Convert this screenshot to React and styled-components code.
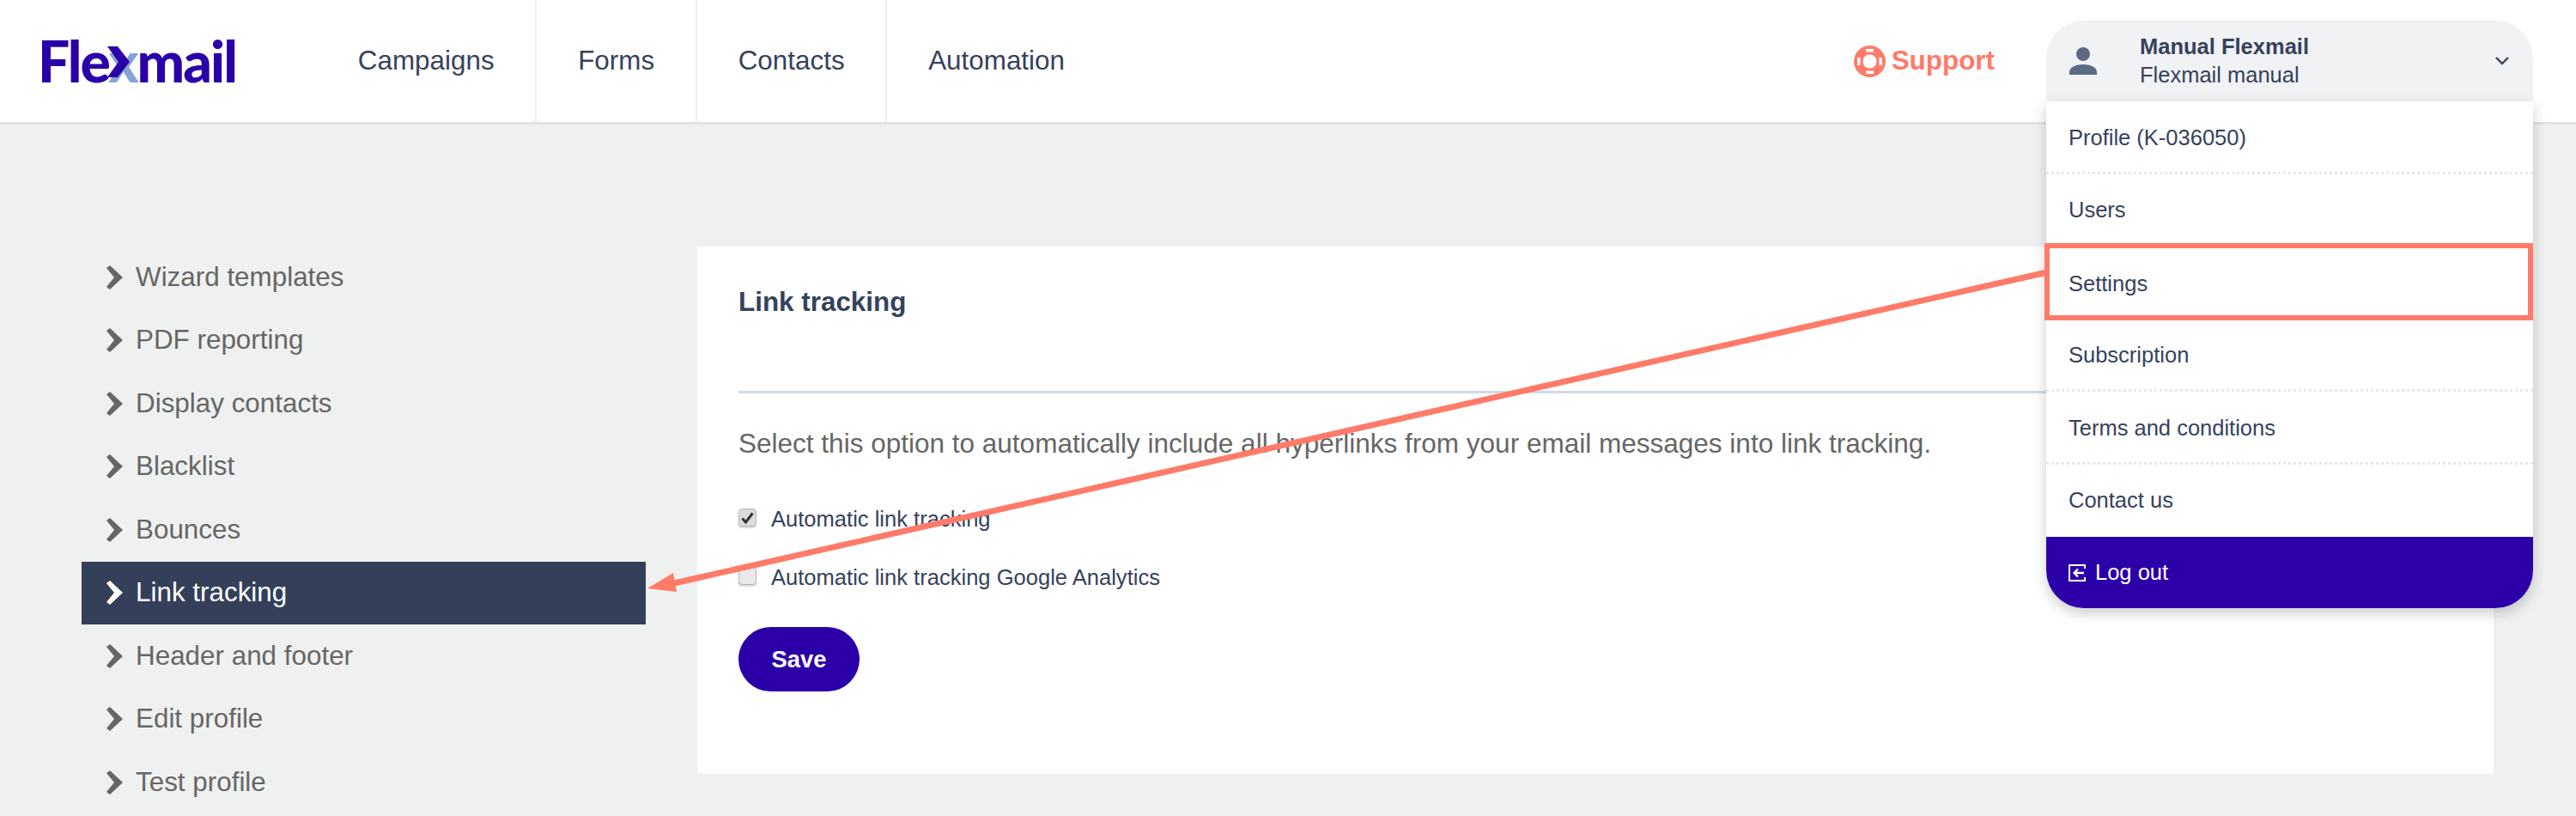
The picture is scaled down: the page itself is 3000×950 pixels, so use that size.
import React from 'react';
import styled, { createGlobalStyle } from 'styled-components';

const Global = createGlobalStyle`
  html, body { margin: 0; padding: 0; height: 950px; overflow: hidden; background: #eff1f0; }
  body { font-family: "Liberation Sans", Arial, sans-serif; color: #35425c; }
  * { box-sizing: border-box; }
`;

const Page = styled.div`
  position: relative;
  width: 3000px;
  height: 950px;
  overflow: hidden;
  background: #eff1f0;
`;

const Header = styled.header`
  display: flex;
  align-items: center;
  height: 145px;
  background: #fff;
  border-bottom: 3px solid #e2e3e3;
`;

const Logo = styled.div`
  position: relative;
  flex: 0 0 369px;
  padding-left: 44px;
  font-family: "Lato", sans-serif;
  font-weight: 900;
  font-size: 66px;
  line-height: 70px;
  letter-spacing: -2px;
  color: #2b00a8;
`;

const LogoX = styled.span`
  position: relative;
  color: #86a3d6;
`;

const LogoChevron = styled.svg`
  position: absolute;
  left: -1px;
  top: 23px;
  width: 30px;
  height: 36px;
`;

const Nav = styled.nav`
  display: flex;
  height: 142px;
`;

const NavLink = styled.a`
  display: flex;
  align-items: center;
  padding: 0 47.8px;
  font-size: 31.4px;
  color: #35425c;
  border-right: ${p => (p.$last ? '0' : '2px solid #eeeeee')};
`;

const Spacer = styled.div`
  flex: 1;
`;

const Support = styled.a`
  display: flex;
  align-items: center;
  gap: 7px;
  margin-right: 60px;
  font-size: 31.4px;
  font-weight: 700;
  color: #ff7b69;
`;

const Account = styled.div`
  position: relative;
  width: 567px;
  margin-right: 50px;
  z-index: 2;
`;

const AccountHead = styled.div`
  display: flex;
  align-items: center;
  height: 94px;
  padding: 0 28px 0 27px;
  background: #f1f2f4;
  border-radius: 44px 44px 0 0;
`;

const AccountText = styled.div`
  flex: 1;
  margin-left: 50px;
`;

const AccountName = styled.div`
  font-size: 25.5px;
  line-height: 33px;
  font-weight: 700;
  color: #35425c;
`;

const AccountSub = styled.div`
  font-size: 25.5px;
  line-height: 33px;
  color: #35425c;
`;

const Menu = styled.ul`
  position: absolute;
  top: 94px;
  left: 0;
  right: 0;
  margin: 0;
  padding: 0;
  list-style: none;
  background: #fff;
  border-radius: 0 0 44px 44px;
  box-shadow: 0 6px 16px rgba(0, 0, 0, 0.2);
`;

const MenuItem = styled.li`
  position: relative;
  display: flex;
  align-items: center;
  height: 84.5px;
  padding: ${p => (p.$plain ? '0' : '3px')} 0 0 26px;
  font-size: 25.5px;
  color: #35425c;
  border-bottom: ${p => (p.$plain ? '0' : '3px dotted #e6e7e8')};

  ${p => p.$highlight && `
    border-bottom: 0;
    &::after {
      content: "";
      position: absolute;
      top: -4px;
      left: -2px;
      right: 0;
      bottom: -1px;
      border: 6px solid #ff7b69;
    }
  `}
`;

const LogoutItem = styled.li`
  display: flex;
  align-items: center;
  gap: 11px;
  height: 83px;
  padding-left: 26px;
  font-size: 25.5px;
  color: #fff;
  background: #2b00a8;
  border-radius: 0 0 44px 44px;
`;

const Content = styled.main`
  display: grid;
  grid-template-columns: 657px 2092px;
  column-gap: 60px;
  padding: 142px 0 0 95px;
  align-items: start;
`;

const Sidebar = styled.ul`
  margin: -1px 0 0;
  padding: 0;
  list-style: none;
`;

const SideItem = styled.li`
  display: flex;
  align-items: center;
  gap: 15px;
  height: 73.5px;
  padding-left: 29px;
  font-size: 31.4px;
  color: ${p => (p.$active ? '#fff' : '#666666')};
  background: ${p => (p.$active ? '#344059' : 'transparent')};
`;

const Card = styled.section`
  padding: 48px 50px 96px 48px;
  background: #fff;
`;

const CardTitle = styled.h2`
  margin: 0;
  padding-bottom: 86px;
  font-size: 31.4px;
  line-height: 34px;
  font-weight: 700;
  color: #35425c;
  border-bottom: 3px solid #d3d9e6;
`;

const Description = styled.p`
  margin: 38px 0 48px;
  font-size: 31.52px;
  line-height: 40px;
  color: #666666;
`;

const CheckRow = styled.label`
  display: flex;
  align-items: center;
  gap: 17px;
  height: 40px;
  margin-bottom: 28px;
  font-size: 25.55px;
  color: #35425c;
`;

const Box = styled.span`
  display: flex;
  align-items: center;
  justify-content: center;
  width: 21px;
  height: 21px;
  margin-top: -3px;
  background: ${p => (p.$checked ? '#dcdcdc' : '#e9e9e9')};
  border: 1px solid #b5b5b5;
  border-radius: 4px;
  box-shadow: 0 2px 0 #dddddd;
`;

const SaveButton = styled.button`
  display: block;
  width: 141px;
  height: 75px;
  margin-top: 38px;
  border: 0;
  border-radius: 38px;
  background: #2b00a8;
  color: #fff;
  font-family: "Liberation Sans", Arial, sans-serif;
  font-size: 27.4px;
  font-weight: 700;
`;

const Overlay = styled.svg`
  position: absolute;
  inset: 0;
  z-index: 3;
  pointer-events: none;
`;

const SideChevron = ({ color }) => (
  <svg width="19" height="28" viewBox="0 0 19 28">
    <path d="M0 3 L4 0 L19 14 L4 28 L0 25 L9 14 Z" fill={color} />
  </svg>
);

const Lifebuoy = () => (
  <svg width="37" height="37" viewBox="0 0 37 37">
    <circle cx="18.5" cy="18.5" r="18.5" fill="#ff7b69" />
    <circle cx="18.5" cy="18.5" r="8" fill="#fff" />
    <rect x="14" y="4" width="9" height="3.5" fill="#fff" />
    <rect x="14" y="29.5" width="9" height="3.5" fill="#fff" />
    <rect x="4" y="14" width="3.5" height="9" fill="#fff" />
    <rect x="29.5" y="14" width="3.5" height="9" fill="#fff" />
  </svg>
);

const Person = () => (
  <svg width="32" height="32" viewBox="0 0 32 32">
    <circle cx="16" cy="8" r="8" fill="#5c6b83" />
    <path d="M0 32 V29 C0 23 8 20 16 20 C24 20 32 23 32 29 V32 Z" fill="#5c6b83" />
  </svg>
);

const Caret = () => (
  <svg width="16" height="10" viewBox="0 0 16 10">
    <path d="M1 1 L8 8 L15 1" fill="none" stroke="#35425c" strokeWidth="2.4" />
  </svg>
);

const LogoutIcon = () => (
  <svg width="20" height="20" viewBox="0 0 20 20">
    <path d="M19 5 V1 H1 V19 H19 V15" fill="none" stroke="#fff" strokeWidth="2" />
    <path d="M18 10 H7 M11 5.5 L6.5 10 L11 14.5" fill="none" stroke="#fff" strokeWidth="2.4" />
  </svg>
);

const Check = () => (
  <svg width="15" height="14" viewBox="0 0 15 14">
    <path d="M1.5 7.5 L5.5 12 L13.5 1.5" fill="none" stroke="#333" strokeWidth="3" />
  </svg>
);

const sideItems = ['Wizard templates', 'PDF reporting', 'Display contacts', 'Blacklist', 'Bounces', 'Link tracking', 'Header and footer', 'Edit profile', 'Test profile'];
const menuItems = ['Profile (K-036050)', 'Users', 'Settings', 'Subscription', 'Terms and conditions', 'Contact us'];
const navItems = ['Campaigns', 'Forms', 'Contacts', 'Automation'];

export default function App() {
  return (
    <Page>
      <Global />
      <Header>
        <Logo>
          Fle<LogoX>x<LogoChevron viewBox="0 0 30 36"><path d="M0 0 H12 L26 18 L12 36 H0 L13 18 Z" fill="#2b00a8" /></LogoChevron></LogoX>mail
        </Logo>
        <Nav>
          {navItems.map((n, i) => (
            <NavLink key={n} $last={i === navItems.length - 1}>{n}</NavLink>
          ))}
        </Nav>
        <Spacer />
        <Support><Lifebuoy />Support</Support>
        <Account>
          <AccountHead>
            <Person />
            <AccountText>
              <AccountName>Manual Flexmail</AccountName>
              <AccountSub>Flexmail manual</AccountSub>
            </AccountText>
            <Caret />
          </AccountHead>
          <Menu>
            {menuItems.map((m, i) => (
              <MenuItem key={m} $highlight={m === 'Settings'} $plain={i === menuItems.length - 1 || m === 'Users'}>{m}</MenuItem>
            ))}
            <LogoutItem><LogoutIcon />Log out</LogoutItem>
          </Menu>
        </Account>
      </Header>
      <Content>
        <Sidebar>
          {sideItems.map(s => (
            <SideItem key={s} $active={s === 'Link tracking'}>
              <SideChevron color={s === 'Link tracking' ? '#fff' : '#666666'} />
              {s}
            </SideItem>
          ))}
        </Sidebar>
        <Card>
          <CardTitle>Link tracking</CardTitle>
          <Description>Select this option to automatically include all hyperlinks from your email messages into link tracking.</Description>
          <CheckRow><Box $checked><Check /></Box>Automatic link tracking</CheckRow>
          <CheckRow><Box />Automatic link tracking Google Analytics</CheckRow>
          <SaveButton>Save</SaveButton>
        </Card>
      </Content>
      <Overlay width="3000" height="950" viewBox="0 0 3000 950">
        <line x1="2384" y1="317" x2="785" y2="679" stroke="#ff7b69" strokeWidth="7" />
        <polygon points="754,685 784,667 788,689" fill="#ff7b69" />
      </Overlay>
    </Page>
  );
}
